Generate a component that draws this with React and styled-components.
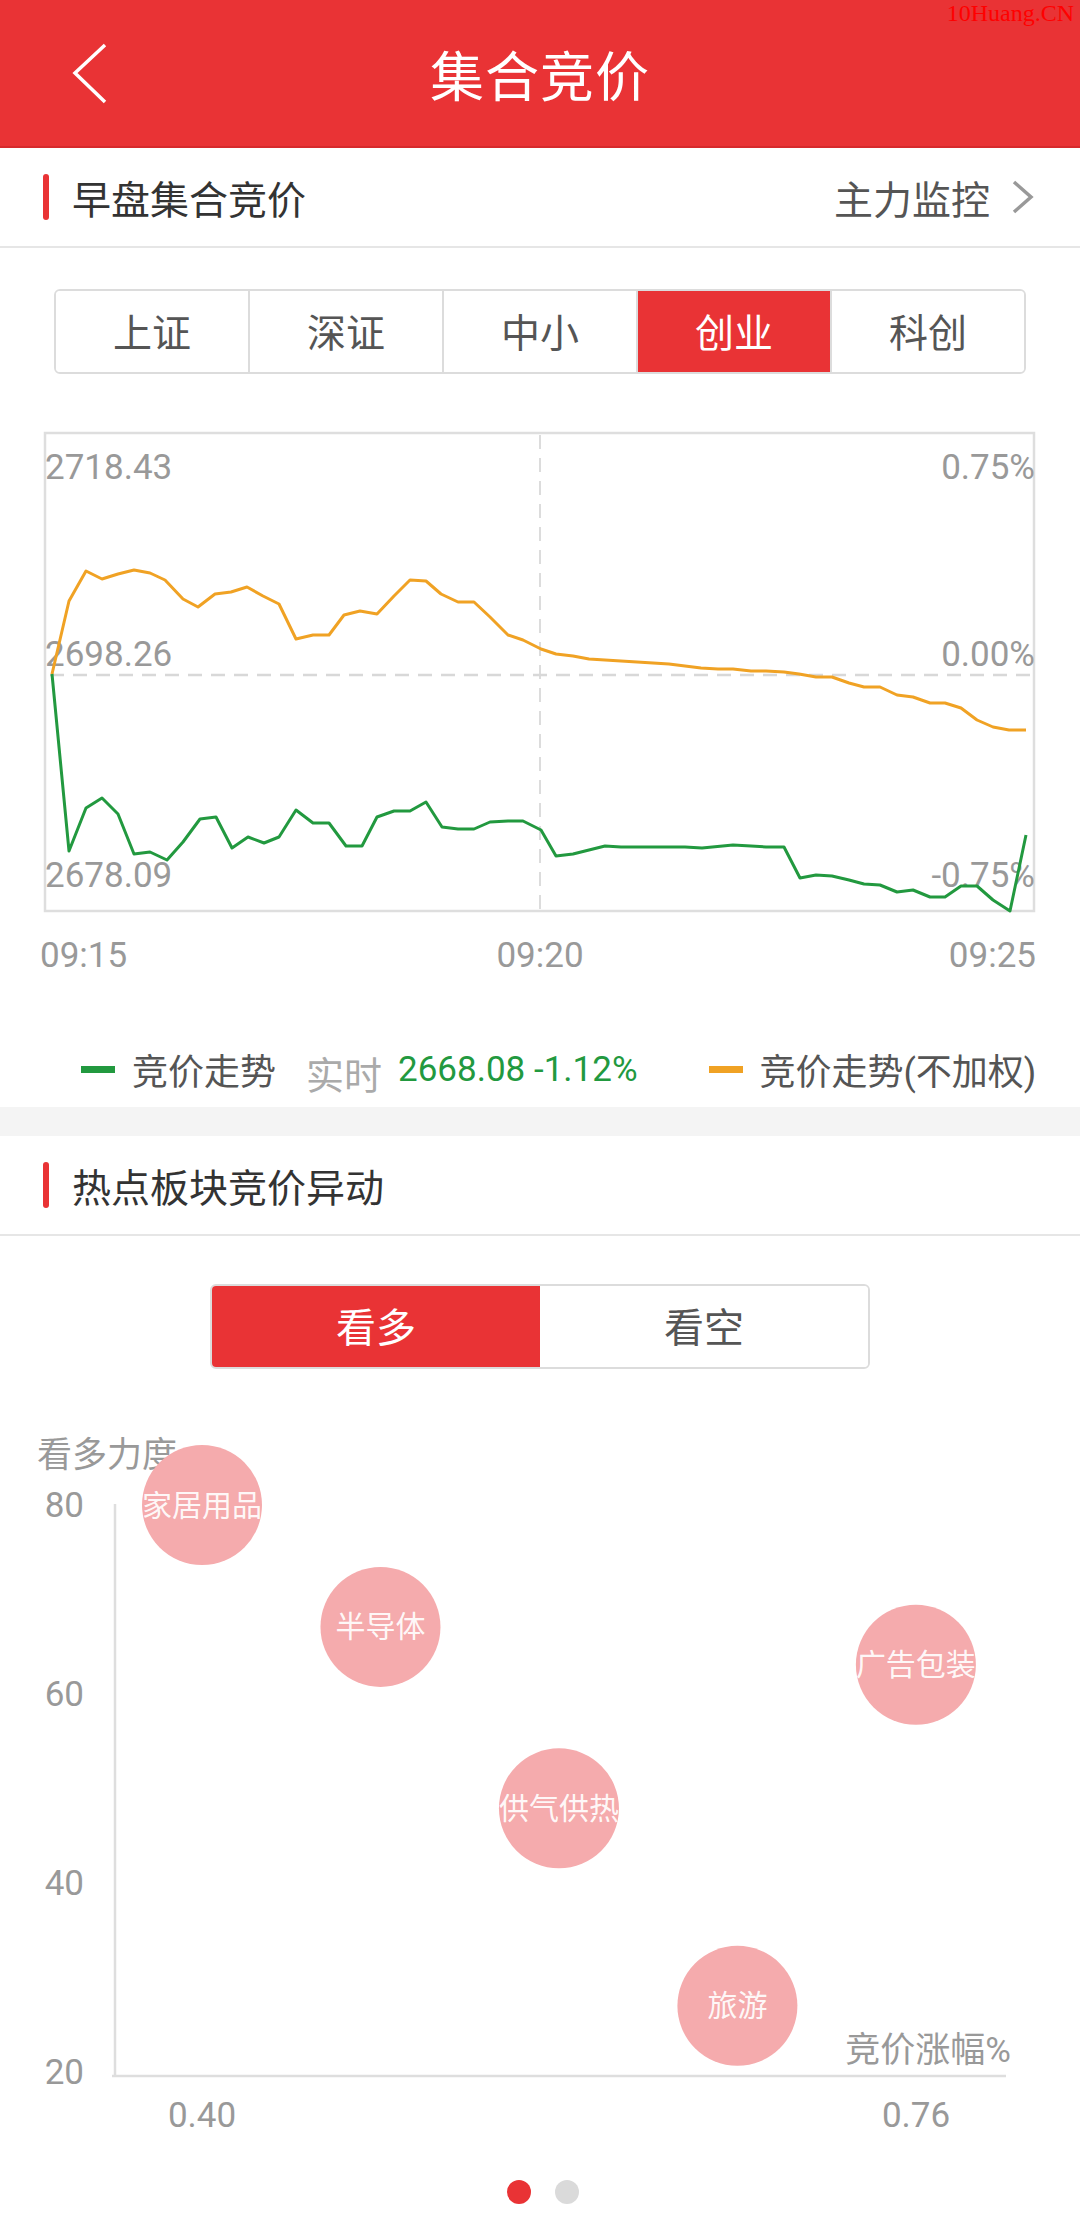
import styled, { createGlobalStyle } from "styled-components";

const GlobalStyle = createGlobalStyle`
  body {
    margin: 0;
    background: #fff;
    font-family: Roboto, "Noto Sans CJK SC", sans-serif;
  }
`;

const RED = "#e93335";
const GREEN = "#22993f";
const ORANGE = "#f0a224";

const Page = styled.div`
  width: 1080px;
  min-height: 2231px;
  background: #fff;
`;

// header
const Header = styled.header`
  position: relative;
  height: 146px;
  background: ${RED};
  border-bottom: 2px solid #d62a2c;
  display: flex;
  align-items: center;
  justify-content: center;
`;

const BackBtn = styled.div`
  position: absolute;
  left: 70px;
  top: 42px;
  width: 40px;
  height: 64px;
`;

const Title = styled.h1`
  margin: 0;
  color: #fff;
  font-size: 54px;
  font-weight: 400;
  letter-spacing: 1px;
`;

const Watermark = styled.span`
  position: absolute;
  right: 6px;
  top: 0;
  font-family: "Liberation Serif", serif;
  font-size: 24px;
  color: #ff0000;
`;

// section title row
const SectionHead = styled.div`
  height: 98px;
  display: flex;
  align-items: center;
  padding: 0 44px 0 43px;
  border-bottom: 2px solid #e6e6e6;
`;

const Bar = styled.span`
  width: 6px;
  height: 46px;
  border-radius: 3px;
  background: ${RED};
  margin-right: 23px;
`;

const SectionTitle = styled.span`
  font-size: 39px;
  color: #333;
  flex: 1;
`;

const MoreLink = styled.span`
  display: flex;
  align-items: center;
  gap: 20px;
  font-size: 39px;
  color: #555;
`;

// index tabs
const TabsWrap = styled.div`
  padding: 41px 54px 0;
`;

const Tabs = styled.div`
  display: flex;
  height: 85px;
  border: 2px solid #dcdcdc;
  border-radius: 6px;
  box-sizing: border-box;
  overflow: hidden;
`;

const Tab = styled.div`
  flex: 1;
  display: flex;
  align-items: center;
  justify-content: center;
  padding-bottom: 4px;
  font-size: 39px;
  color: ${(p) => (p.$active ? "#fff" : "#555")};
  background: ${(p) => (p.$active ? RED : "#fff")};
  border-left: ${(p) => (p.$first ? "none" : "2px solid #dcdcdc")};
`;

const ChartSvg = styled.svg`
  display: block;
  margin-top: 25px;
`;

// legend
const Legend = styled.div`
  height: 108px;
  box-sizing: border-box;
  padding: 32px 0 0 81px;
  display: flex;
  align-items: center;
`;

const Dash = styled.span`
  width: 34px;
  height: 7px;
  background: ${(p) => p.$color};
  margin-right: 17px;
  margin-left: ${(p) => p.$gap || 0}px;
`;

const LegendText = styled.span`
  font-size: 36px;
  color: #555;
`;

const LiveLabel = styled.span`
  font-size: 38px;
  color: #aaa;
  margin: 6px 16px 0 30px;
`;

const LiveValue = styled.span`
  font-size: 35px;
  color: ${GREEN};
`;

const Band = styled.div`
  height: 29px;
  background: #f4f4f4;
`;

// bull / bear toggle
const ToggleWrap = styled.div`
  padding-top: 48px;
  display: flex;
  justify-content: center;
`;

const Toggle = styled.div`
  display: flex;
  width: 660px;
  height: 85px;
  border: 2px solid #dcdcdc;
  border-radius: 6px;
  box-sizing: border-box;
  overflow: hidden;
`;

const ToggleBtn = styled.div`
  flex: 1;
  display: flex;
  align-items: center;
  justify-content: center;
  padding-bottom: 4px;
  font-size: 40px;
  color: ${(p) => (p.$active ? "#fff" : "#555")};
  background: ${(p) => (p.$active ? RED : "#fff")};
`;

const ScatterSvg = styled.svg`
  display: block;
  margin-top: 30px;
`;

const Dots = styled.div`
  display: flex;
  justify-content: center;
  gap: 24px;
  margin-top: 21px;
  padding-left: 6px;
`;

const Dot = styled.span`
  width: 24px;
  height: 24px;
  border-radius: 50%;
  background: ${(p) => (p.$active ? RED : "#dadada")};
`;

const orange = [
  [52, 675], [69, 602], [86, 572], [102, 580], [118, 575], [134, 571], [150, 574],
  [165, 581], [183, 600], [198, 608], [215, 595], [231, 593], [247, 588], [263, 597],
  [279, 605], [296, 640], [313, 636], [329, 636], [344, 616], [360, 612], [377, 615],
  [394, 597], [410, 581], [426, 582], [441, 595], [458, 603], [474, 603], [490, 618],
  [508, 636], [523, 641], [541, 650], [556, 655], [573, 657], [589, 660], [605, 661],
  [621, 662], [637, 663], [653, 664], [669, 665], [685, 667], [701, 669], [718, 670],
  [733, 670], [751, 672], [766, 672], [784, 673], [799, 675], [816, 678], [832, 678],
  [849, 684], [864, 688], [880, 688], [897, 696], [913, 698], [930, 704], [945, 704],
  [961, 709], [977, 721], [993, 728], [1009, 731], [1026, 731],
];

const green = [
  [52, 675], [69, 852], [86, 809], [102, 799], [118, 815], [134, 855], [150, 853],
  [167, 861], [183, 843], [200, 820], [216, 818], [232, 849], [248, 838], [264, 844],
  [279, 838], [296, 811], [313, 824], [329, 824], [346, 847], [362, 847], [377, 818],
  [394, 812], [410, 812], [426, 803], [442, 828], [458, 830], [474, 830], [490, 823],
  [508, 822], [523, 822], [541, 831], [556, 857], [573, 855], [589, 851], [605, 847],
  [621, 848], [653, 848], [685, 848], [702, 849], [733, 846], [751, 847], [766, 848],
  [784, 848], [800, 879], [816, 876], [832, 877], [849, 881], [864, 885], [880, 886],
  [897, 893], [913, 891], [930, 898], [945, 898], [961, 887], [977, 887], [993, 901],
  [1010, 912], [1026, 836],
];

const toPts = (arr) => arr.map(([x, y]) => `${x},${y - 400}`).join(" ");

const sectors = [
  { name: "家居用品", x: 0.4, y: 80 },
  { name: "半导体", x: 0.49, y: 67.1 },
  { name: "广告包装", x: 0.76, y: 63.1 },
  { name: "供气供热", x: 0.58, y: 47.9 },
  { name: "旅游", x: 0.67, y: 27 },
];

const sx = (v) => 202 + (v - 0.4) * 1983;
const sy = (v) => 673 - (v - 20) * 9.45;

const labelFont = { fontFamily: 'Roboto, "Noto Sans CJK SC", sans-serif' };

function LineChart() {
  return (
    <ChartSvg width="1080" height="600" viewBox="0 0 1080 600" style={labelFont}>
      <rect x="45" y="34" width="989" height="478" fill="none" stroke="#dedede" strokeWidth="2.5" />
      <line x1="540" y1="36" x2="540" y2="511" stroke="#dcdcdc" strokeWidth="2" strokeDasharray="14 9" />
      <line x1="50" y1="276" x2="1034" y2="276" stroke="#d8d8d8" strokeWidth="2.5" strokeDasharray="14 9" />
      <g fontSize="35" fill="#999" dominantBaseline="central">
        <text x="45" y="68">2718.43</text>
        <text x="45" y="255">2698.26</text>
        <text x="45" y="476">2678.09</text>
        <text x="1035" y="68" textAnchor="end">0.75%</text>
        <text x="1035" y="255" textAnchor="end">0.00%</text>
        <text x="1035" y="476" textAnchor="end">-0.75%</text>
        <text x="40" y="556">09:15</text>
        <text x="540" y="556" textAnchor="middle">09:20</text>
        <text x="1036" y="556" textAnchor="end">09:25</text>
      </g>
      <polyline points={toPts(orange)} fill="none" stroke={ORANGE} strokeWidth="3" strokeLinejoin="round" />
      <polyline points={toPts(green)} fill="none" stroke={GREEN} strokeWidth="3" strokeLinejoin="round" />
    </ChartSvg>
  );
}

function Scatter() {
  return (
    <ScatterSvg width="1080" height="760" viewBox="0 0 1080 760" style={labelFont}>
      <g fontSize="35" fill="#999" dominantBaseline="central">
        <text x="37" y="56">看多力度</text>
        {[80, 60, 40, 20].map((v) => (
          <text key={v} x="84" y={sy(v)} textAnchor="end">{v}</text>
        ))}
        <text x="202" y="716" textAnchor="middle">0.40</text>
        <text x="916" y="716" textAnchor="middle">0.76</text>
        <text x="1011" y="651" textAnchor="end">竞价涨幅%</text>
      </g>
      <line x1="115" y1="105" x2="115" y2="678" stroke="#dedede" strokeWidth="2.5" />
      <line x1="112" y1="677" x2="1006" y2="677" stroke="#dedede" strokeWidth="2.5" />
      {sectors.map((s) => (
        <g key={s.name}>
          <circle cx={sx(s.x)} cy={sy(s.y)} r="60" fill="#f5abad" />
          <text
            x={sx(s.x)}
            y={sy(s.y)}
            fontSize="30"
            fill="#fff"
            fillOpacity="0.92"
            textAnchor="middle"
            dominantBaseline="central"
          >
            {s.name}
          </text>
        </g>
      ))}
    </ScatterSvg>
  );
}

export default function App() {
  const tabs = ["上证", "深证", "中小", "创业", "科创"];
  return (
    <Page>
      <GlobalStyle />
      <Header>
        <BackBtn>
          <svg width="40" height="64" viewBox="0 0 40 64">
            <polyline points="35,3 5,31 35,60" fill="none" stroke="#fff" strokeWidth="3.5" />
          </svg>
        </BackBtn>
        <Title>集合竞价</Title>
        <Watermark>10Huang.CN</Watermark>
      </Header>

      <SectionHead>
        <Bar />
        <SectionTitle>早盘集合竞价</SectionTitle>
        <MoreLink>
          主力监控
          <svg width="26" height="36" viewBox="0 0 26 36">
            <polyline points="4,3 21,18 4,33" fill="none" stroke="#999" strokeWidth="3.5" />
          </svg>
        </MoreLink>
      </SectionHead>

      <TabsWrap>
        <Tabs>
          {tabs.map((t, i) => (
            <Tab key={t} $first={i === 0} $active={t === "创业"}>
              {t}
            </Tab>
          ))}
        </Tabs>
      </TabsWrap>

      <LineChart />

      <Legend>
        <Dash $color={GREEN} />
        <LegendText>竞价走势</LegendText>
        <LiveLabel>实时</LiveLabel>
        <LiveValue>2668.08 -1.12%</LiveValue>
        <Dash $color={ORANGE} $gap={71} />
        <LegendText>竞价走势(不加权)</LegendText>
      </Legend>

      <Band />

      <SectionHead>
        <Bar />
        <SectionTitle>热点板块竞价异动</SectionTitle>
      </SectionHead>

      <ToggleWrap>
        <Toggle>
          <ToggleBtn $active>看多</ToggleBtn>
          <ToggleBtn>看空</ToggleBtn>
        </Toggle>
      </ToggleWrap>

      <Scatter />

      <Dots>
        <Dot $active />
        <Dot />
      </Dots>
    </Page>
  );
}
